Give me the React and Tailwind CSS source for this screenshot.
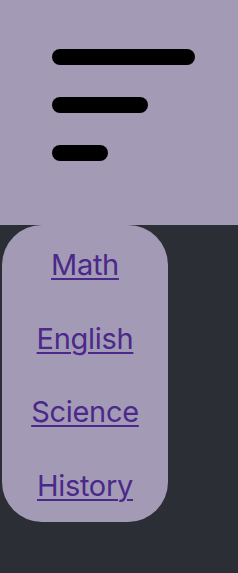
import React from "react";

const links = ["Math", "English", "Science", "History"];

export default function App() {
  return (
    <div
      className="w-[238px] h-[573px] bg-[#2c2e35] overflow-hidden"
      style={{ fontFamily: "Inter, 'Noto Sans', sans-serif" }}
    >
      {/* header with menu icon */}
      <div className="h-[225px] bg-[#a39bb6] pt-[49px] pl-[52px] flex flex-col gap-[32px]">
        <div className="w-[143px] h-[16px] rounded-full bg-black" />
        <div className="w-[96px] h-[16px] rounded-full bg-black" />
        <div className="w-[56px] h-[16px] rounded-full bg-black" />
      </div>

      {/* menu panel */}
      <nav className="ml-[2px] w-[166px] h-[297px] pt-[3px] bg-[#a39bb6] rounded-[40px] flex flex-col">
        {links.map((l) => (
          <a
            key={l}
            href="#"
            className="h-[74.3px] flex items-center justify-center text-[29px] tracking-[-0.3px] text-[#4b2889] underline underline-offset-[3px] decoration-[2px]"
          >
            {l}
          </a>
        ))}
      </nav>
    </div>
  );
}
